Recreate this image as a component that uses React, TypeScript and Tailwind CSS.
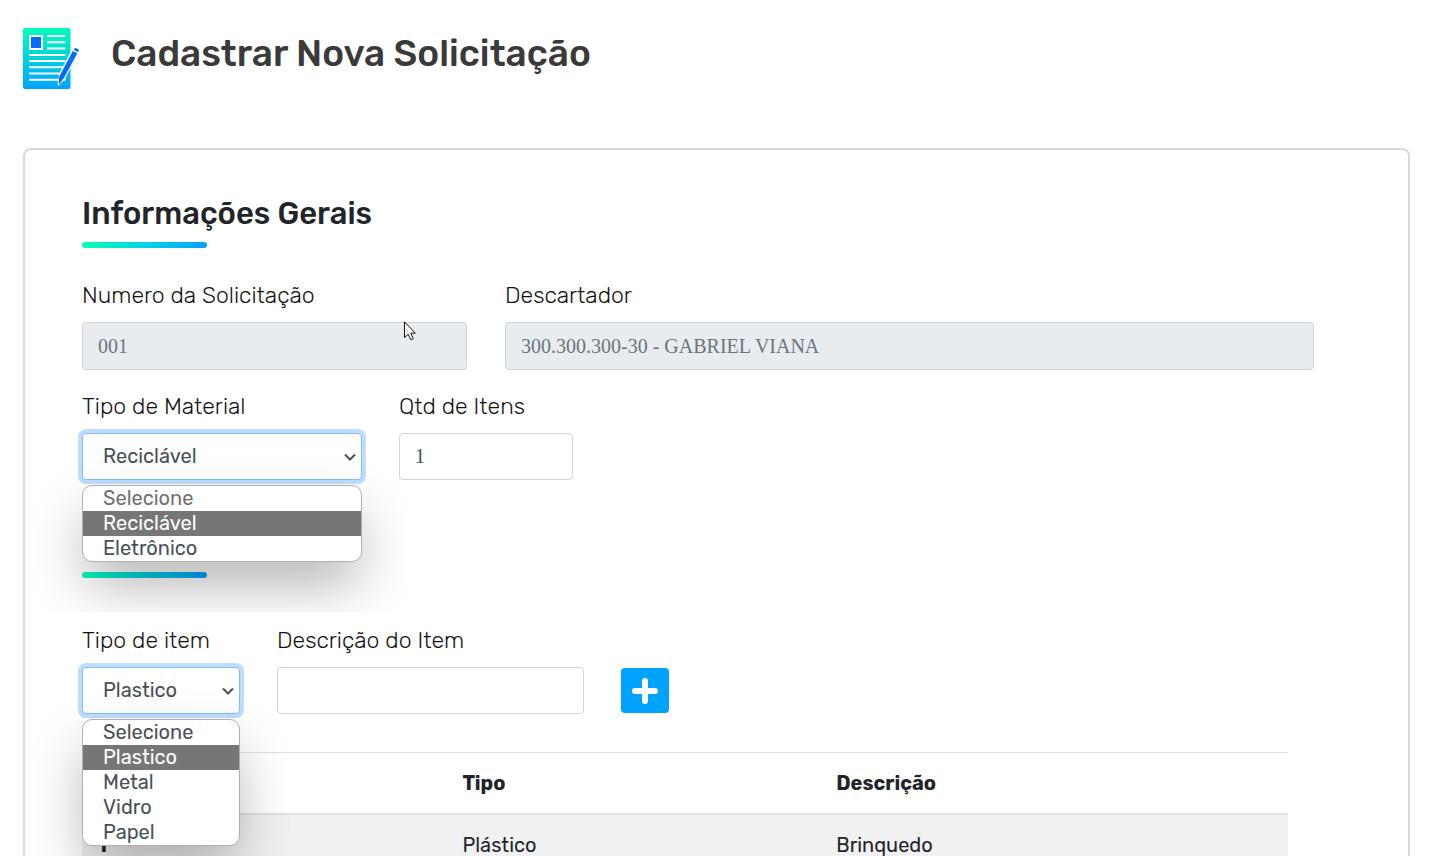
import type { ReactNode } from "react";

const labelClass = "text-[23px] leading-[33px] font-light text-[#111111] whitespace-nowrap";
const serifInput =
  "block w-full rounded border border-[#ced4da] px-[15px] font-['Liberation_Serif',serif] text-[20px]";
const disabledInput = `${serifInput} h-12 bg-[#e9ecef] text-[#6c757d]`;
const enabledInput = `${serifInput} h-[47px] bg-white text-[#495057]`;

function DocumentIcon() {
  return (
    <svg width="56" height="62" viewBox="0 0 56 62" aria-hidden="true">
      <defs>
        <linearGradient id="sheet" x1="0" y1="0" x2="0" y2="1">
          <stop offset="0" stopColor="#00ffb9" />
          <stop offset="1" stopColor="#00a2ff" />
        </linearGradient>
      </defs>
      <rect width="47.500" height="61" rx="2" fill="url(#sheet)" />
      <rect x="6" y="7" width="14" height="15" fill="#fff" />
      <rect x="8" y="9" width="10" height="11" fill="#006dff" />
      <path
        d="M24 8h18.500M24 14.300h18.500M24 20.500h18.500M6 27h36.500M6 33h36.500M6 39.300h36.500M6 45.500h36.500M6 51.800h36.500"
        stroke="#fff"
        strokeWidth="2"
      />
      <path d="M50 19 56.500 22.500 42 51 35.500 58 34.500 56 36 46Z" fill="#fff" />
      <path d="M49.800 23 54.200 25.500 41.200 49.500 36 56.500 35.800 49.500Z" fill="#006dff" />
      <path d="M50.800 21.800 52.300 19.800 56 21.800 55 24.200Z" fill="#006dff" />
    </svg>
  );
}

function SectionTitle({ children }: { children: ReactNode }) {
  return (
    <div>
      <h2 className="text-[31px] leading-[40px] font-medium text-[#212529]">{children}</h2>
      <div className="mt-2 h-[6px] w-[125px] rounded-[3px] bg-linear-to-r from-[#00ffb9] to-[#00a2ff]" />
    </div>
  );
}

interface OpenSelectProps {
  id: string;
  label: string;
  value: string;
  options: string[];
  mutedFirst?: boolean;
  className: string;
}

function OpenSelect({ id, label, value, options, mutedFirst, className }: OpenSelectProps) {
  return (
    <div className={className}>
      <label htmlFor={id} className={labelClass}>
        {label}
      </label>
      <div className="relative mt-[10px]">
        <select
          id={id}
          defaultValue={value}
          className="block h-[47px] w-full appearance-none rounded border border-[#80bdff] bg-white pr-8 pb-px pl-5 text-[20px] text-[#495057] ring-4 ring-[#bfdeff] outline-none"
        >
          {options.map((o) => (
            <option key={o}>{o}</option>
          ))}
        </select>
        <svg
          className="pointer-events-none absolute top-5 right-[6px]"
          width="12"
          height="9"
          viewBox="0 0 12 9"
          fill="none"
          aria-hidden="true"
        >
          <path d="M1 1.500 6 6.500 11 1.500" stroke="#495057" strokeWidth="2" />
        </svg>
        <ul
          role="listbox"
          aria-label={label}
          className="absolute top-full left-0 z-10 mt-[5px] w-full rounded-[10px] border border-[#b0b0b0] bg-white text-[20px] leading-[25px] text-[#495057] shadow-[0_26px_56px_-4px_rgba(0,0,0,0.3)] [clip-path:inset(-50px)]"
        >
          {options.map((o, i) => (
            <li
              key={o}
              role="option"
              aria-selected={o === value}
              className={
                o === value
                  ? "bg-[#767676] pl-5 text-white"
                  : mutedFirst && i === 0
                    ? "pl-5 text-[#707070]"
                    : "pl-5"
              }
            >
              {o}
            </li>
          ))}
        </ul>
      </div>
    </div>
  );
}

function Pointer() {
  return (
    <svg
      className="pointer-events-none absolute -top-px right-[51px]"
      width="12"
      height="20"
      viewBox="0 0 12 20"
      aria-hidden="true"
    >
      <path
        d="M.5 .8V16.500L4.100 13.200 6.700 18.500Q8 19 9.200 17.500L6.800 12.200H11.300Z"
        fill="#fff"
        stroke="#111"
      />
    </svg>
  );
}

const items = [{ id: 1, type: "Plástico", description: "Brinquedo" }];

export default function App() {
  return (
    <main className="h-screen overflow-y-auto bg-white pr-[25px] pl-[23px] font-[Rubik,Inter,sans-serif] [scrollbar-width:none]">
      <header className="flex items-start gap-8 pt-7">
        <DocumentIcon />
        <h1 className="text-[37px] leading-[50px] font-medium text-[#3a3a3a]">
          Cadastrar Nova Solicitação
        </h1>
      </header>

      <form className="mt-[58px] rounded-lg border-2 border-[#d8d8d8] pt-11 pr-[94px] pb-10 pl-[57px]">
        <SectionTitle>Informações Gerais</SectionTitle>

        <div className="mt-[31px] grid grid-cols-[385fr_809fr] gap-[38px]">
          <div>
            <label htmlFor="numero" className={labelClass}>
              Numero da Solicitação
            </label>
            <div className="relative mt-[10px]">
              <input id="numero" disabled defaultValue="001" className={disabledInput} />
              <Pointer />
            </div>
          </div>
          <div>
            <label htmlFor="descartador" className={labelClass}>
              Descartador
            </label>
            <div className="mt-[10px]">
              <input
                id="descartador"
                disabled
                defaultValue="300.300.300-30 - GABRIEL VIANA"
                className={disabledInput}
              />
            </div>
          </div>
        </div>

        <div className="mt-5 flex gap-[37px]">
          <OpenSelect
            id="material"
            label="Tipo de Material"
            value="Reciclável"
            options={["Selecione", "Reciclável", "Eletrônico"]}
            mutedFirst
            className="w-[280px]"
          />
          <div className="w-[174px]">
            <label htmlFor="quantidade" className={labelClass}>
              Qtd de Itens
            </label>
            <div className="mt-[10px]">
              <input id="quantidade" defaultValue="1" className={enabledInput} />
            </div>
          </div>
        </div>

        <div className="mt-11">
          <SectionTitle>Adicionar Itens</SectionTitle>
        </div>

        <div className="mt-[46px] flex items-end gap-[37px]">
          <OpenSelect
            id="tipo-item"
            label="Tipo de item"
            value="Plastico"
            options={["Selecione", "Plastico", "Metal", "Vidro", "Papel"]}
            className="w-[158px]"
          />
          <div className="w-[307px]">
            <label htmlFor="descricao" className={labelClass}>
              Descrição do Item
            </label>
            <div className="mt-[10px]">
              <input id="descricao" className={enabledInput} />
            </div>
          </div>
          <button
            type="button"
            aria-label="Adicionar item"
            className="mb-px flex h-[45px] w-12 items-center justify-center rounded bg-[#00a2ff]"
          >
            <svg width="26" height="26" viewBox="0 0 26 26" aria-hidden="true">
              <path d="M13 3v20M3 13h20" stroke="#fff" strokeWidth="6" strokeLinecap="round" />
            </svg>
          </button>
        </div>

        <div className="mt-[38px] pr-[26px]">
          <table className="w-full table-fixed border-collapse text-left text-[20px] leading-[30px] text-[#212529]">
            <thead>
              <tr className="border-t border-b-2 border-[#dee2e6]">
                <td className="w-[30.3%] p-[15px]" />
                <th className="w-[31%] p-[15px] font-bold">Tipo</th>
                <th className="p-[15px] font-bold">Descrição</th>
              </tr>
            </thead>
            <tbody>
              {items.map((item) => (
                <tr key={item.id} className="bg-[#f1f1f1]">
                  <th className="p-[15px] font-bold">{item.id}</th>
                  <td className="p-[15px]">{item.type}</td>
                  <td className="p-[15px]">{item.description}</td>
                </tr>
              ))}
            </tbody>
          </table>
        </div>
      </form>
    </main>
  );
}
